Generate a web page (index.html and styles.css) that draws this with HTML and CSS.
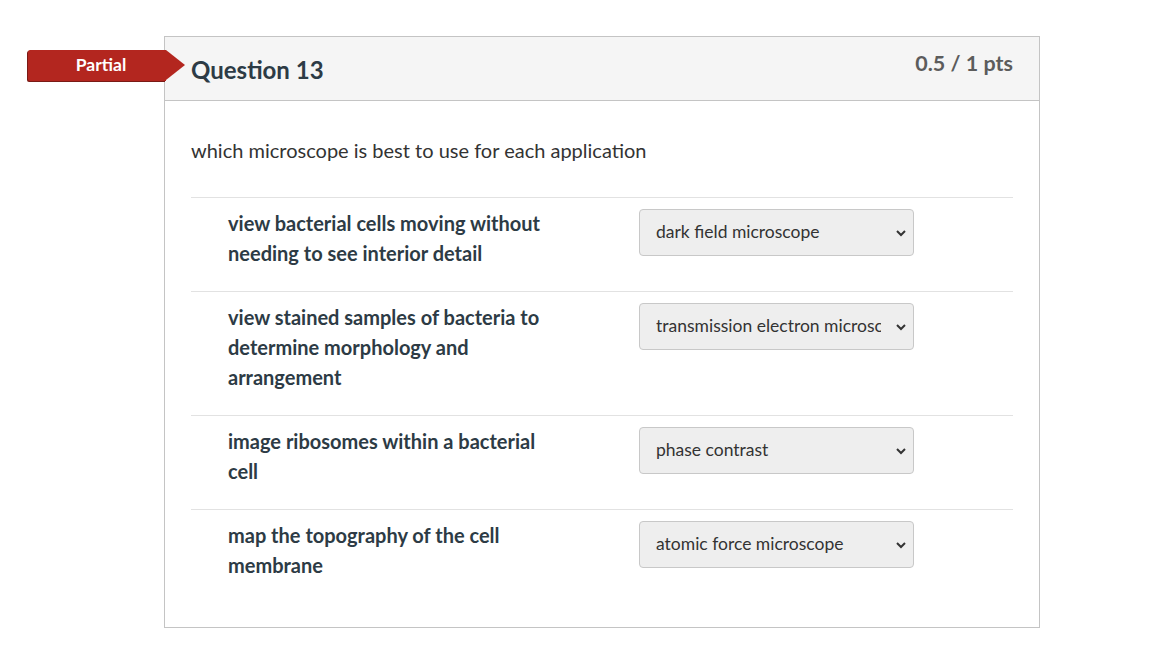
FILE: index.html
```html
<!DOCTYPE html>
<html lang="en">
<head>
    <meta charset="UTF-8">
    <title>Question 13</title>
    <link rel="stylesheet" href="styles.css">
</head>
<body>
    <div class="quiz-page">
        <div class="question">
            <div class="badge">Partial</div>
            <div class="question-header">
                <h2 class="question-title">Question 13</h2>
                <span class="question-points">0.5 / 1 pts</span>
            </div>
            <div class="question-body">
                <p class="question-text">which microscope is best to use for each application</p>

                <div class="answer-row">
                    <div class="answer-label">view bacterial cells moving without needing to see interior detail</div>
                    <select class="answer-select">
                        <option>dark field microscope</option>
                    </select>
                </div>
                <div class="answer-row">
                    <div class="answer-label">view stained samples of bacteria to determine morphology and arrangement</div>
                    <select class="answer-select">
                        <option>transmission electron microscope</option>
                    </select>
                </div>
                <div class="answer-row">
                    <div class="answer-label">image ribosomes within a bacterial cell</div>
                    <select class="answer-select">
                        <option>phase contrast</option>
                    </select>
                </div>
                <div class="answer-row">
                    <div class="answer-label">map the topography of the cell membrane</div>
                    <select class="answer-select">
                        <option>atomic force microscope</option>
                    </select>
                </div>
            </div>
        </div>
    </div>
</body>
</html>
```

FILE: styles.css
```css
body {
    margin: 0;
    font-family: Lato, "Noto Sans", sans-serif;
    background-color: #ffffff;
    color: #2d3b45;
}
.quiz-page {
    padding: 36px 0 0 164px;
}
.question {
    position: relative;
    width: 874px;
    border: 1px solid #c4c4c4;
}
.badge {
    position: absolute;
    top: 13px;
    left: -137px;
    width: 130px;
    height: 31px;
    padding-left: 8px;
    line-height: 30px;
    background-color: #b3261f;
    color: white;
    font-size: 17.5px;
    font-weight: bold;
    text-align: center;
    border-radius: 2px 0 0 2px;
    box-shadow: -1px 1px 0 #7a1a15;
}
.badge:after {
    content: "";
    position: absolute;
    top: 0;
    right: -19px;
    border-top: 15.5px solid transparent;
    border-bottom: 15.5px solid transparent;
    border-left: 19px solid #b3261f;
}
.question-header {
    display: flex;
    justify-content: space-between;
    align-items: flex-start;
    height: 63px;
    padding: 0 26px;
    background-color: #f5f5f5;
    border-bottom: 1px solid #c4c4c4;
}
.question-title {
    margin: 0;
    padding-top: 18px;
    font-size: 24px;
    line-height: 29px;
    font-weight: bold;
}
.question-points {
    padding-top: 14px;
    font-size: 21.5px;
    line-height: 25px;
    font-weight: bold;
    color: #5c5c5c;
}
.question-body {
    padding: 35px 26px 24px 26px;
}
.question-text {
    margin: 0 0 33px 0;
    font-size: 20px;
    line-height: 28px;
    color: #333333;
}
.answer-row {
    display: flex;
    align-items: flex-start;
    padding: 10px 0 23px 37px;
    border-top: 1px solid #e2e2e2;
}
.answer-label {
    width: 330px;
    margin-right: 81px;
    font-size: 20px;
    line-height: 30px;
    font-weight: bold;
}
.answer-select {
    -webkit-appearance: none;
    appearance: none;
    width: 275px;
    height: 47px;
    margin-top: 1px;
    padding: 0 32px 3px 16px;
    font-family: Lato, "Noto Sans", sans-serif;
    font-size: 17.5px;
    color: #333333;
    background-color: #eeeeee;
    border: 1px solid #c8c8c8;
    border-radius: 4px;
    background-image: url("data:image/svg+xml;utf8,<svg xmlns='http://www.w3.org/2000/svg' width='12' height='8' viewBox='0 0 12 8'><path d='M2 2 L6 6 L10 2' fill='none' stroke='%23333' stroke-width='2'/></svg>");
    background-repeat: no-repeat;
    background-position: right 6px center;
}
```
